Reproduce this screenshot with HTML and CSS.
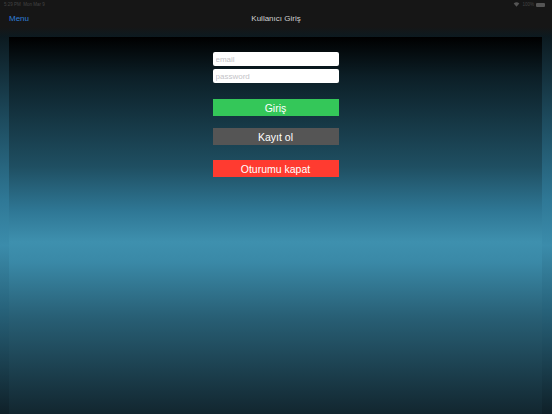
FILE: index.html
```html
<!DOCTYPE html>
<html>
<head>
<meta charset="utf-8">
<link rel="stylesheet" href="styles.css">
</head>
<body>
<div class="screen">
  <header class="topbar">
    <div class="status">
      <span class="status-left">5:29 PM&nbsp;&nbsp;Mon Mar 9</span>
      <span class="status-right">
        <svg class="wifi" viewBox="0 0 10 8" width="7" height="5"><path d="M5 7.5 L0.5 2.5 A6.5 6.5 0 0 1 9.5 2.5 Z" fill="#555"/></svg>
        <span class="pct">100%</span>
        <span class="battery"></span>
      </span>
    </div>
    <nav class="navbar">
      <span class="nav-left">Menu</span>
      <span class="nav-title">Kullanıcı Giriş</span>
      <span class="nav-right"></span>
    </nav>
  </header>
  <main class="panel">
    <form class="login">
      <input class="field" type="text" placeholder="email">
      <input class="field" type="password" placeholder="password">
      <button type="button" class="btn btn-green">Giriş</button>
      <button type="button" class="btn btn-gray">Kayıt ol</button>
      <button type="button" class="btn btn-red">Oturumu kapat</button>
    </form>
  </main>
</div>
</body>
</html>
```
FILE: styles.css
```css
html, body {
  margin: 0;
  padding: 0;
  height: 100%;
}
body {
  font-family: "Liberation Sans", Arial, sans-serif;
  background: linear-gradient(to bottom,
    #161616 0px, #161616 27px, #0c1a20 37px,
    #1d4b5e 120px, #2f7896 200px, #3b8cab 245px,
    #27627a 310px, #0f2028 414px);
  overflow: hidden;
}
.screen {
  width: 552px;
  height: 414px;
  display: flex;
  flex-direction: column;
}
.topbar {
  height: 37px;
  flex: none;
  display: flex;
  flex-direction: column;
}
.status {
  height: 9px;
  display: flex;
  justify-content: space-between;
  align-items: center;
  padding: 0 7px 0 4px;
  font-size: 4.5px;
  color: #444;
}
.status-right {
  display: flex;
  align-items: center;
  gap: 2px;
}
.battery {
  width: 9px;
  height: 4px;
  background: #555;
  border-radius: 1px;
}
.navbar {
  height: 19px;
  display: flex;
  align-items: center;
  justify-content: space-between;
  padding: 0 9px;
}
.nav-left {
  color: #2f7fd8;
  font-size: 8px;
  width: 60px;
}
.nav-right {
  width: 60px;
}
.nav-title {
  color: #d0d0d0;
  font-size: 8px;
}
.panel {
  flex: 1;
  margin: 0 10px 0 9px;
  background: linear-gradient(to bottom,
    #000000 0px, #0c1f27 40px, #1f4f62 130px, #2f7896 175px,
    #3e90ae 205px, #3a89a7 225px, #285f75 280px, #12262f 377px);
  display: flex;
  justify-content: center;
}
.login {
  width: 126px;
  margin-top: 15px;
  display: flex;
  flex-direction: column;
}
.field {
  box-sizing: border-box;
  height: 14px;
  margin: 0 0 3px 0;
  border: none;
  border-radius: 2px;
  background: #fff;
  padding: 0 3px;
  font-family: "Liberation Sans", Arial, sans-serif;
  font-size: 8px;
  color: #333;
  outline: none;
}
.field::placeholder {
  color: #c4c4c8;
}
.btn {
  height: 17px;
  border: none;
  padding: 0;
  font-family: "Liberation Sans", Arial, sans-serif;
  font-size: 10.5px;
  color: #fff;
  margin: 0;
}
.btn-green {
  background: #34c759;
  margin-top: 13px;
}
.btn-gray {
  background: #555555;
  margin-top: 12px;
}
.btn-red {
  background: #ff3b30;
  margin-top: 15px;
}
```
